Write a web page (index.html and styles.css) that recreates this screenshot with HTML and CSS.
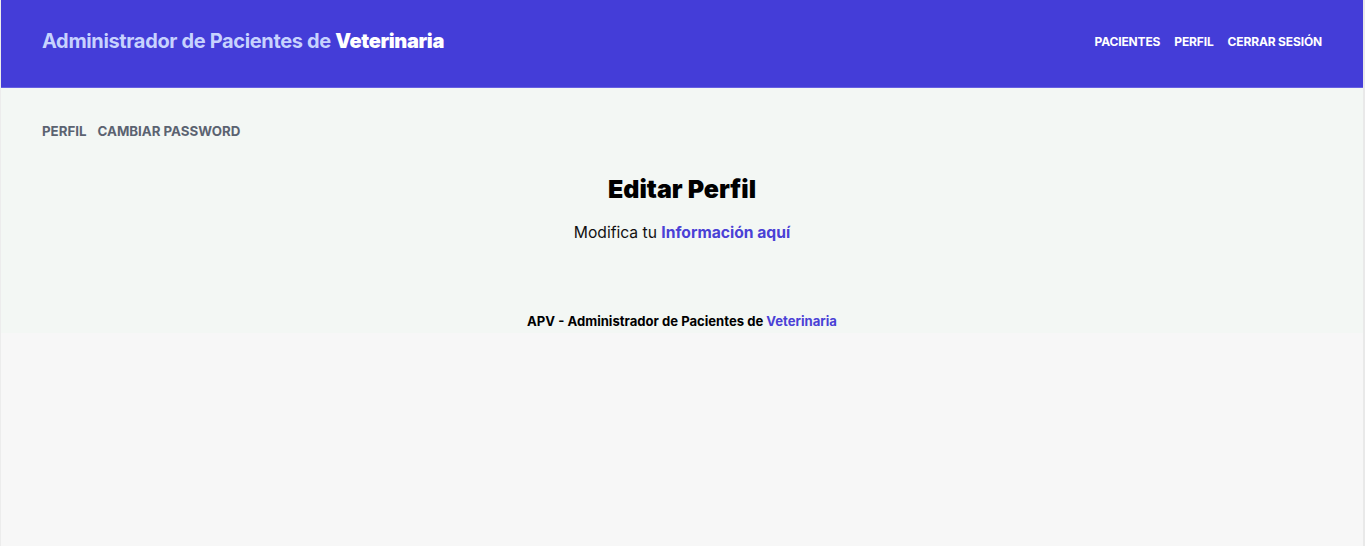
FILE: index.html
```html
<!DOCTYPE html>
<html lang="es">
<head>
<meta charset="utf-8">
<title>APV - Editar Perfil</title>
<link rel="stylesheet" href="styles.css">
</head>
<body>
<header class="header">
  <div class="container header-inner">
    <h1 class="brand">Administrador de Pacientes de <span class="brand-strong">Veterinaria</span></h1>
    <nav class="nav">
      <a href="#" class="nav-link">Pacientes</a>
      <a href="#" class="nav-link">Perfil</a>
      <a href="#" class="nav-link">Cerrar Sesión</a>
    </nav>
  </div>
</header>
<div class="app">
  <main class="container main">
    <nav class="subnav">
      <a href="#" class="subnav-link">Perfil</a>
      <a href="#" class="subnav-link">Cambiar Password</a>
    </nav>
    <section class="intro">
      <h2 class="title">Editar Perfil</h2>
      <p class="subtitle">Modifica tu <span class="accent">Información aquí</span></p>
    </section>
  </main>
  <footer class="footer">
    <p>APV - Administrador de Pacientes de <span class="footer-accent">Veterinaria</span></p>
  </footer>
</div>
</body>
</html>
```

FILE: styles.css
```css
* { box-sizing: border-box; }
html, body { margin: 0; padding: 0; }
body {
  font-family: Inter, "Noto Sans", "Liberation Sans", sans-serif;
  background: #f7f7f7;
  min-height: 546px;
  border-left: 1px solid #ececec;
  border-right: 2px solid #e9e9e9;
}
a { text-decoration: none; }
p, h1, h2 { margin: 0; }

.container {
  max-width: 1280px;
  margin: 0 auto;
}

.header {
  background: #443dd8;
  padding: 27px 0 32px;
  border-bottom: 1px solid #6660e2;
}
.header-inner {
  display: flex;
  align-items: center;
  justify-content: space-between;
}
.brand {
  font-size: 20px;
  line-height: 28px;
  font-weight: 700;
  color: #c7d2fe;
  letter-spacing: -0.35px;
}
.brand-strong {
  color: #ffffff;
  font-weight: 900;
}
.nav {
  display: flex;
  gap: 14px;
  padding-top: 2px;
}
.nav-link {
  color: #ffffff;
  font-size: 12px;
  line-height: 20px;
  font-weight: 700;
  letter-spacing: -0.15px;
  text-transform: uppercase;
}

.app {
  background: #f3f7f4;
  padding-bottom: 2px;
}
.main {
  padding-top: 33px;
}
.subnav {
  display: flex;
  gap: 11px;
}
.subnav-link {
  color: #5b6371;
  font-size: 13.3px;
  line-height: 20px;
  font-weight: 700;
  text-transform: uppercase;
}
.intro {
  margin-top: 32px;
  text-align: center;
}
.title {
  font-size: 25px;
  line-height: 32px;
  font-weight: 900;
  color: #000000;
}
.subtitle {
  margin-top: 14px;
  font-size: 15.65px;
  line-height: 28px;
  color: #111111;
}
.accent {
  color: #4a41d6;
  font-weight: 700;
}
.footer {
  margin-top: 64px;
  text-align: center;
  font-size: 13.1px;
  line-height: 20px;
  font-weight: 700;
  color: #000000;
}
.footer-accent {
  color: #4a41d6;
}
```
